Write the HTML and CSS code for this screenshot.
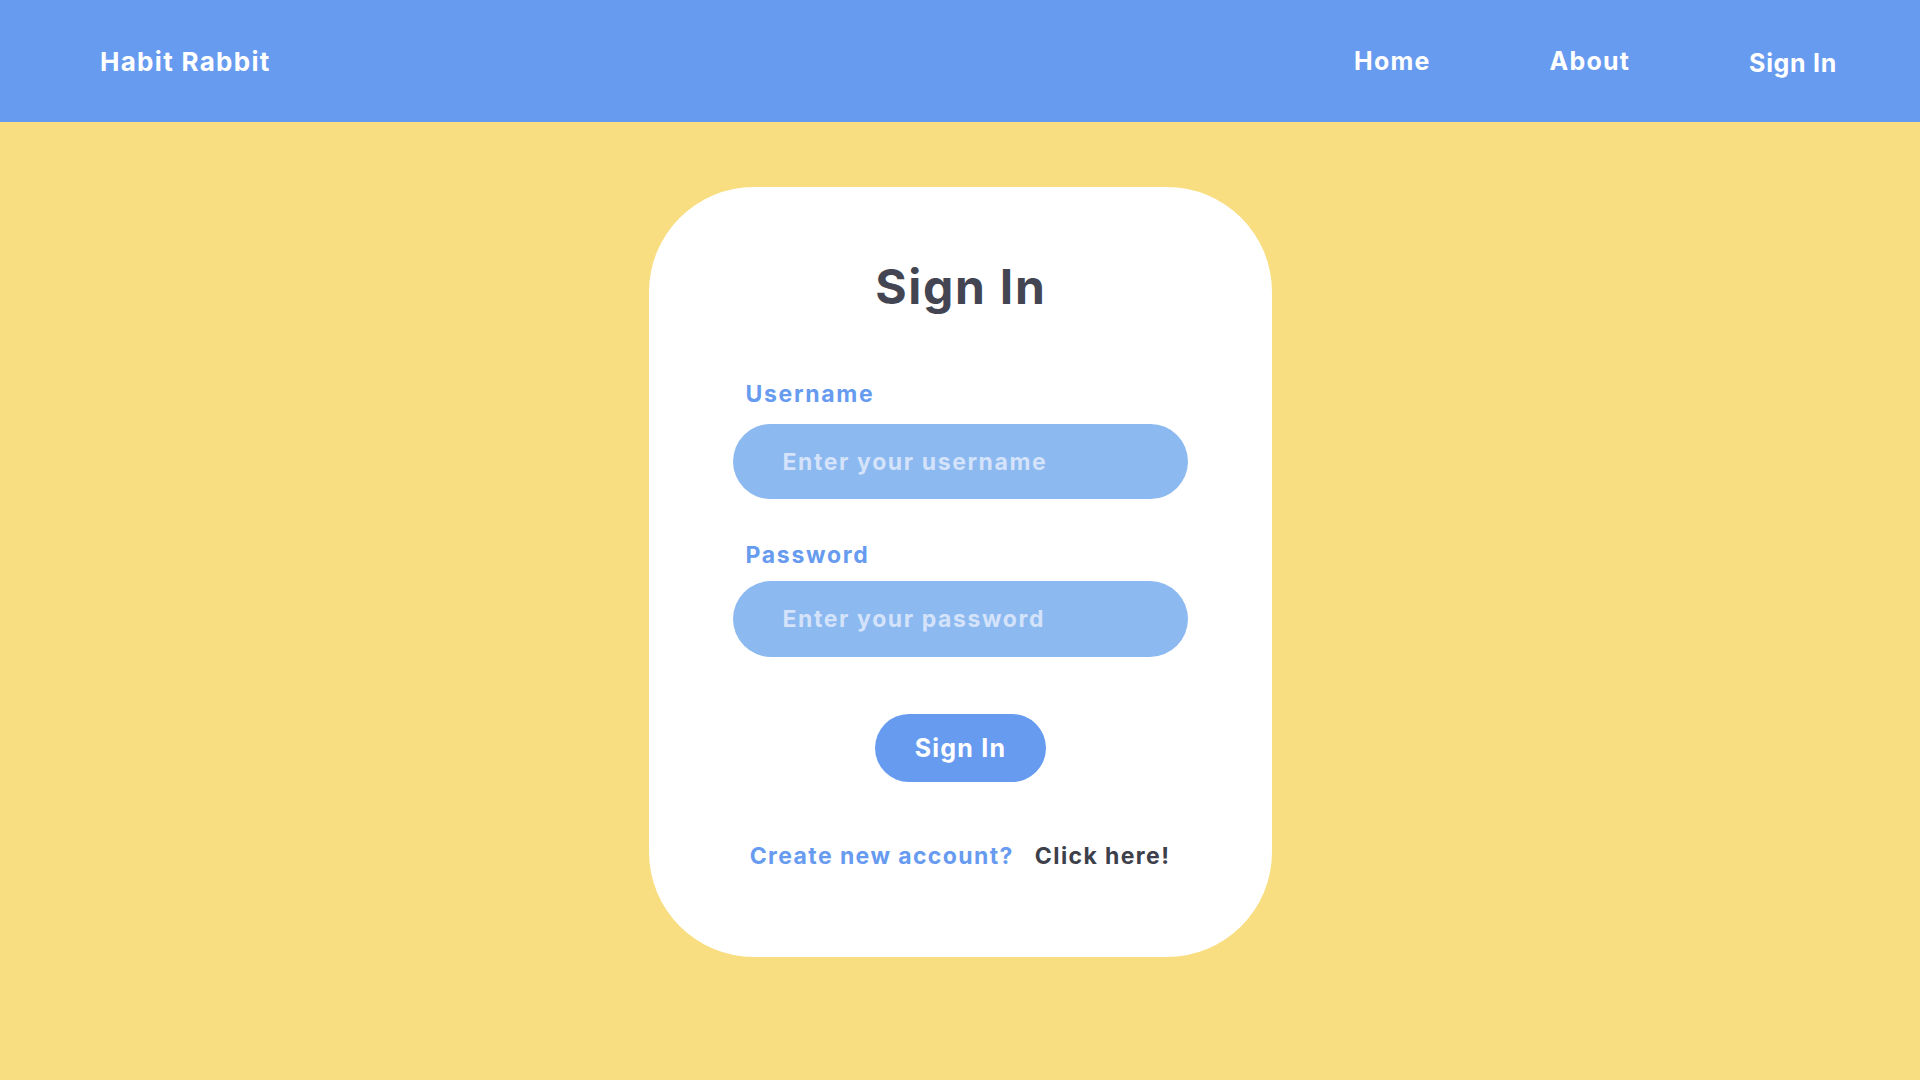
FILE: index.html
```html
<!DOCTYPE html>
<html lang="en">
<head>
<meta charset="utf-8">
<title>Habit Rabbit - Sign In</title>
<link rel="stylesheet" href="styles.css">
</head>
<body>
<header class="topbar">
  <div class="brand">Habit Rabbit</div>
  <nav class="nav">
    <a class="nav-link" href="#">Home</a>
    <a class="nav-link" href="#">About</a>
    <a class="nav-link nav-signin" href="#">Sign In</a>
  </nav>
</header>
<main class="page">
  <section class="card">
    <h1 class="title">Sign In</h1>
    <form class="form">
      <label class="label label-user" for="username">Username</label>
      <input class="field field-user" id="username" type="text" placeholder="Enter your username">
      <label class="label label-pass" for="password">Password</label>
      <input class="field field-pass" id="password" type="password" placeholder="Enter your password">
      <button class="submit" type="button">Sign In</button>
    </form>
    <p class="register"><a class="register-q" href="#">Create new account?</a><a class="register-link" href="#">Click here!</a></p>
  </section>
</main>
</body>
</html>
```
FILE: styles.css
```css
* { box-sizing: border-box; }
html, body { margin: 0; padding: 0; }
body {
  background: #f8de80;
  font-family: Inter, "Open Sans", sans-serif;
  font-weight: 700;
  min-height: 100vh;
}
a { text-decoration: none; }

.topbar {
  height: 122px;
  background: #679bf0;
  display: flex;
  align-items: center;
  justify-content: space-between;
  padding: 0 83px 0 100px;
  color: #fff;
}
.brand {
  font-size: 26px;
  line-height: 30px;
  padding-top: 2px;
  letter-spacing: 1.3px;
}
.nav {
  display: flex;
  gap: 119px;
  align-items: center;
}
.nav-link {
  color: #fff;
  font-size: 25px;
  line-height: 30px;
  letter-spacing: 1.2px;
}
.nav-signin { padding-top: 4px; letter-spacing: 0.7px; }

.page {
  display: flex;
  justify-content: center;
  padding-top: 65px;
}
.card {
  width: 623px;
  height: 770px;
  background: #fff;
  border-radius: 105px;
  padding-top: 76px;
  display: flex;
  flex-direction: column;
  align-items: center;
}
.title {
  margin: 0;
  font-size: 48px;
  line-height: 48px;
  color: #434652;
  letter-spacing: 1.7px;
  padding-left: 1.7px;
}
.form {
  width: 455px;
  display: flex;
  flex-direction: column;
  align-items: stretch;
}
.label {
  font-size: 23px;
  line-height: 28px;
  color: #679bf0;
  padding-left: 13px;
  letter-spacing: 1.7px;
}
.label-user { margin-top: 69px; }
.label-pass { margin-top: 42px; }
.field {
  height: 75px;
  border: none;
  outline: none;
  border-radius: 40px;
  background: #8bb9f0;
  font-family: inherit;
  font-weight: 700;
  font-size: 23px;
  letter-spacing: 1.6px;
  color: #fff;
  padding: 0 0 0 50px;
}
.field::placeholder { color: #d4e3fa; opacity: 1; }
.field-user { margin-top: 16px; }
.field-pass { margin-top: 12px; height: 76px; }
.submit {
  align-self: center;
  margin-top: 57px;
  width: 171px;
  height: 68px;
  border: none;
  border-radius: 34px;
  background: #679bf0;
  color: #fff;
  font-family: inherit;
  font-weight: 700;
  font-size: 25px;
  line-height: 30px;
  letter-spacing: 1.2px;
  padding: 0 0 0 1px;
}
.register {
  margin: 60px 0 0;
  font-size: 23px;
  line-height: 28px;
  letter-spacing: 1.4px;
  display: flex;
  gap: 21px;
}
.register-q { color: #679bf0; }
.register-link { color: #3d404a; }
```
